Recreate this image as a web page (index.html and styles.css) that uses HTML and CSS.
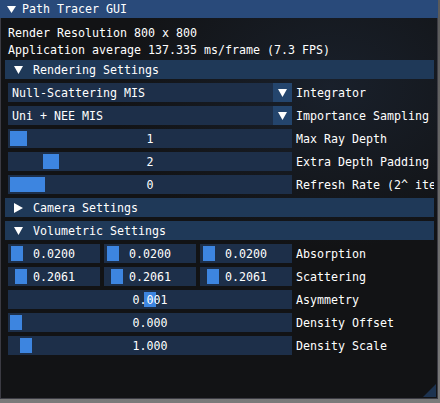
FILE: index.html
```html
<!DOCTYPE html>
<html>
<head>
<meta charset="utf-8">
<link rel="stylesheet" href="styles.css">
</head>
<body>
<div class="window">
  <div class="titlebar">
    <svg class="tri-title" width="9" height="7" viewBox="0 0 9 7"><polygon points="0,0 9,0 4.5,7" fill="#fff"/></svg>
    <span class="title-text">Path Tracer GUI</span>
  </div>
  <div class="content">
    <div class="text">Render Resolution 800 x 800</div>
    <div class="text">Application average 137.335 ms/frame (7.3 FPS)</div>

    <div class="header">
      <svg class="tri-down" width="9" height="8" viewBox="0 0 9 8"><polygon points="0,0 9,0 4.5,8" fill="#fff"/></svg>
      <span class="header-text">Rendering Settings</span>
    </div>

    <div class="row">
      <div class="combo">
        <span class="combo-val">Null-Scattering MIS</span>
        <span class="combo-btn"><svg width="9" height="8" viewBox="0 0 9 8"><polygon points="0,0 9,0 4.5,8" fill="#fff"/></svg></span>
      </div>
      <span class="label">Integrator</span>
    </div>
    <div class="row">
      <div class="combo">
        <span class="combo-val">Uni + NEE MIS</span>
        <span class="combo-btn"><svg width="9" height="8" viewBox="0 0 9 8"><polygon points="0,0 9,0 4.5,8" fill="#fff"/></svg></span>
      </div>
      <span class="label">Importance Sampling</span>
    </div>
    <div class="row">
      <div class="frame"><span class="grab" style="left:2px;width:17px"></span><span class="val">1</span></div>
      <span class="label">Max Ray Depth</span>
    </div>
    <div class="row">
      <div class="frame"><span class="grab" style="left:35px;width:16px"></span><span class="val">2</span></div>
      <span class="label">Extra Depth Padding</span>
    </div>
    <div class="row">
      <div class="frame"><span class="grab" style="left:2px;width:35px"></span><span class="val">0</span></div>
      <span class="label">Refresh Rate (2^ iterations)</span>
    </div>

    <div class="header">
      <svg class="tri-right" width="9" height="10" viewBox="0 0 9 10"><polygon points="0,0 9,5 0,10" fill="#fff"/></svg>
      <span class="header-text">Camera Settings</span>
    </div>
    <div class="header">
      <svg class="tri-down" width="9" height="8" viewBox="0 0 9 8"><polygon points="0,0 9,0 4.5,8" fill="#fff"/></svg>
      <span class="header-text">Volumetric Settings</span>
    </div>

    <div class="row">
      <div class="multi">
        <div class="frame small"><span class="grab" style="left:3px;width:12px"></span><span class="val">0.0200</span></div>
        <div class="frame small"><span class="grab" style="left:3px;width:12px"></span><span class="val">0.0200</span></div>
        <div class="frame small"><span class="grab" style="left:3px;width:12px"></span><span class="val">0.0200</span></div>
      </div>
      <span class="label">Absorption</span>
    </div>
    <div class="row">
      <div class="multi">
        <div class="frame small"><span class="grab" style="left:7px;width:12px"></span><span class="val">0.2061</span></div>
        <div class="frame small"><span class="grab" style="left:7px;width:12px"></span><span class="val">0.2061</span></div>
        <div class="frame small"><span class="grab" style="left:7px;width:12px"></span><span class="val">0.2061</span></div>
      </div>
      <span class="label">Scattering</span>
    </div>
    <div class="row">
      <div class="frame"><span class="grab" style="left:136px;width:12px"></span><span class="val">0.001</span></div>
      <span class="label">Asymmetry</span>
    </div>
    <div class="row">
      <div class="frame"><span class="grab" style="left:2px;width:12px"></span><span class="val">0.000</span></div>
      <span class="label">Density Offset</span>
    </div>
    <div class="row">
      <div class="frame"><span class="grab" style="left:12px;width:12px"></span><span class="val">1.000</span></div>
      <span class="label">Density Scale</span>
    </div>
  </div>
  <svg class="grip" width="13" height="13" viewBox="0 0 13 13"><polygon points="0,13 13,0 13,13" fill="#1d3350"/></svg>
</div>
</body>
</html>
```
FILE: styles.css
```css
html, body {
  margin: 0;
  padding: 0;
}
body {
  width: 440px;
  height: 403px;
  overflow: hidden;
  background: linear-gradient(180deg, #5a5a5a 0%, #7a7a7a 100%);
  font-family: "DejaVu Sans Mono", "Liberation Mono", monospace;
  font-size: 11.63px;
  color: #ffffff;
}
.window {
  position: relative;
  width: 438px;
  height: 399px;
  display: flex;
  flex-direction: column;
}
.titlebar {
  height: 18px;
  flex: none;
  background: #294a7a;
  display: flex;
  align-items: flex-start;
  padding-left: 7px;
  line-height: 18px;
  white-space: nowrap;
}
.tri-title {
  margin-top: 6px;
  flex: none;
}
.title-text {
  margin-left: 6px;
}
.content {
  flex: 1;
  min-height: 0;
  border: 1px solid #3b3b43;
  border-top: none;
  background: radial-gradient(ellipse 220px 160px at 330px 70px, #19202b 0%, #121315 100%);
  padding: 8px 3px 0 7px;
  display: flex;
  flex-direction: column;
  gap: 4px;
  overflow: hidden;
}
.text {
  height: 13px;
  line-height: 14px;
  white-space: nowrap;
  flex: none;
}
.header {
  height: 19px;
  flex: none;
  margin-left: -3px;
  box-sizing: border-box;
  background: #1f3958;
  display: flex;
  align-items: flex-start;
  padding-left: 9px;
  white-space: nowrap;
}
.tri-down {
  margin-top: 6px;
  flex: none;
}
.tri-right {
  margin-top: 5px;
  flex: none;
}
.header-text {
  margin-left: 10px;
  line-height: 18px;
  padding-top: 1px;
}
.row {
  display: flex;
  height: 19px;
  flex: none;
  gap: 4px;
  white-space: nowrap;
  overflow: hidden;
}
.label {
  line-height: 18px;
  padding-top: 1px;
}
.combo {
  width: 284px;
  flex: none;
  display: flex;
}
.combo-val {
  flex: 1;
  background: #1d2f49;
  padding-left: 4px;
  line-height: 18px;
  padding-top: 1px;
}
.combo-btn {
  width: 19px;
  flex: none;
  background: #24456d;
  display: flex;
  align-items: center;
  justify-content: center;
}
.frame {
  position: relative;
  width: 284px;
  height: 19px;
  flex: none;
  box-sizing: border-box;
  background: #1d2f49;
  display: flex;
  justify-content: center;
  line-height: 18px;
  padding-top: 1px;
}
.frame.small {
  width: 92px;
}
.multi {
  width: 284px;
  flex: none;
  display: flex;
  gap: 4px;
}
.grab {
  position: absolute;
  top: 2px;
  height: 15px;
  background: #3d85e0;
}
.val {
  position: relative;
}
.grip {
  position: absolute;
  right: 2px;
  bottom: 2px;
}
```
